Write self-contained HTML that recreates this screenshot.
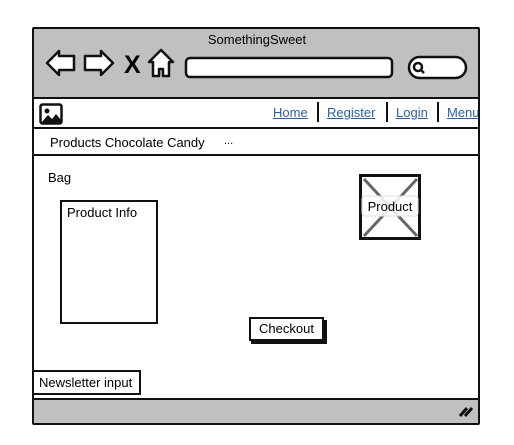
<!DOCTYPE html>
<html><head><style>
body{margin:0;width:514px;height:445px;background:#fff;position:relative;overflow:hidden;font-family:"Liberation Sans",sans-serif;font-size:13px;color:#000}
.a{position:absolute;box-sizing:border-box}
a{color:#2a5ea8;text-decoration:underline}
</style></head><body>
<div class="a" style="left:32px;top:27px;width:448px;height:398px;border:2.5px solid #111;border-radius:2px"></div>
<div class="a" style="left:34px;top:29px;width:444px;height:70px;background:#c0c0c0;border-bottom:2.5px solid #111"></div>
<div class="a" style="left:0;width:514px;top:32px;text-align:center;font-size:13px">SomethingSweet</div>
<svg class="a" style="left:40px;top:46px" width="440" height="34" viewBox="0 0 440 34">
<g fill="#fff" stroke="#111" stroke-width="2.5" stroke-linejoin="round">
<path d="M7 17 L19 5 L19 10 L34 10 L34 24 L19 24 L19 29 Z"/>
<path d="M73 17 L61 5 L61 10 L45 10 L45 24 L61 24 L61 29 Z"/>
<path d="M121 4 L109 16 L113 16 L113 30 L119 30 L119 23 L123 23 L123 30 L129 30 L129 16 L133 16 Z"/>
<rect x="146" y="12" width="206" height="19" rx="4"/>
<rect x="369" y="11" width="57" height="21" rx="10.5"/>
</g>
<text x="84" y="27" font-family="Liberation Sans" font-weight="bold" font-size="25" transform="scale(1,1)">X</text>
<circle cx="378" cy="21" r="4" fill="none" stroke="#111" stroke-width="2.5"/>
<line x1="381" y1="24" x2="384" y2="27" stroke="#111" stroke-width="2.5"/>
</svg>
<svg class="a" style="left:39px;top:103px" width="24" height="22"><rect x="1.5" y="1.5" width="21" height="19" fill="#fff" stroke="#111" stroke-width="2.5" rx="2"/><circle cx="8" cy="8" r="2.5" fill="#111"/><path d="M2 20 L9 12 L13 16 L17 11 L22 17 L22 20 Z" fill="#111"/></svg>
<div class="a" style="left:273px;top:105px;font-size:13px"><a>Home</a></div>
<div class="a" style="left:317px;top:102px;width:2px;height:20px;background:#111"></div>
<div class="a" style="left:327px;top:105px"><a>Register</a></div>
<div class="a" style="left:386px;top:102px;width:2px;height:20px;background:#111"></div>
<div class="a" style="left:396px;top:105px"><a>Login</a></div>
<div class="a" style="left:437px;top:102px;width:2px;height:20px;background:#111"></div>
<div class="a" style="left:447px;top:105px;width:31px;overflow:hidden"><a>Menu</a></div>
<div class="a" style="left:32px;top:127px;width:448px;height:29px;border:2.5px solid #111;border-radius:2px;background:#fff"></div>
<div class="a" style="left:50px;top:135px">Products Chocolate Candy</div>
<div class="a" style="left:224px;top:135px;font-size:11px">...</div>
<div class="a" style="left:48px;top:170px">Bag</div>
<div class="a" style="left:60px;top:200px;width:98px;height:124px;border:2px solid #111"></div>
<div class="a" style="left:67px;top:205px">Product Info</div>
<svg class="a" style="left:359px;top:174px" width="63" height="67"><rect x="1.5" y="1.5" width="59" height="63" fill="#fff" stroke="#111" stroke-width="3"/><path d="M5 5 L58 62 M58 5 L5 62" stroke="#666" stroke-width="3"/><rect x="3" y="22" width="56" height="20" rx="3" fill="#fff" fill-opacity=".85" stroke="#ddd"/><text x="31" y="37" text-anchor="middle" font-family="Liberation Sans" font-size="13">Product</text></svg>
<div class="a" style="left:251px;top:320px;width:76px;height:24px;background:#111"></div>
<div class="a" style="left:249px;top:317px;width:75px;height:24px;border:2px solid #111;background:#fff;text-align:center;line-height:20px">Checkout</div>
<div class="a" style="left:32px;top:370px;width:109px;height:25px;border:2px solid #111;background:#fff;padding-left:5px;line-height:21px">Newsletter input</div>
<div class="a" style="left:34px;top:398px;width:444px;height:25px;background:#c0c0c0;border-top:2.5px solid #111"></div>
<svg class="a" style="left:458px;top:404px" width="16" height="14"><path d="M2 12 L9 4 M7 12 L14 4" stroke="#111" stroke-width="3"/></svg>
</body></html>
